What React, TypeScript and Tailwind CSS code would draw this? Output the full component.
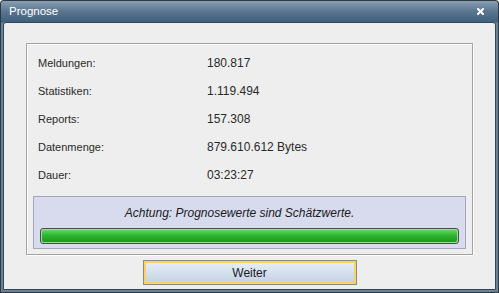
const rows = [
  ['Meldungen:', '180.817'],
  ['Statistiken:', '1.119.494'],
  ['Reports:', '157.308'],
  ['Datenmenge:', '879.610.612 Bytes'],
  ['Dauer:', '03:23:27'],
]

function App() {
  return (
    <div className="w-[499px] h-[293px] bg-[#2c3945] p-[1px] rounded-t-[4px] font-['Liberation_Sans',Arial,sans-serif]">
      <div className="flex flex-col h-full rounded-t-[3px] bg-[linear-gradient(#8aa0b3,#5b7790_10px,#3f607b_21px,#6b8295_22px,#6b8295)]">
        <div className="h-[21px] shrink-0 flex items-center justify-between pl-[8px] pr-[14px]">
          <span className="text-white text-[11.5px] leading-none">Prognose</span>
          <svg width="7" height="7" viewBox="0 0 7 7">
            <path d="M1 1 L6 6 M6 1 L1 6" stroke="#ffffff" strokeWidth="2" strokeLinecap="square" />
          </svg>
        </div>
        <div className="flex-1 px-[2px] pb-[2px]">
          <div className="h-full border border-[#33475a] rounded-t-[3px] bg-[#eeeeee] flex flex-col items-center">
            <div className="mt-[20px] w-[447px] h-[212px] border border-[#a3a3a3] shadow-[inset_1px_1px_0_#ffffff,1px_1px_0_#ffffff] flex flex-col px-[6px] pt-[5px]">
              {rows.map(([label, value]) => (
                <div key={label} className="h-[28px] flex items-center text-[#2a2a2a]">
                  <span className="w-[174px] pl-[5px] text-[11px]">{label}</span>
                  <span className="text-[12px]">{value}</span>
                </div>
              ))}
              <div className="mt-[7px] h-[53px] bg-[#d8dbee] border border-[#a4a7b8] flex flex-col px-[6px]">
                <div className="h-[31px] flex items-center justify-center pr-[20px] italic text-[12px] text-[#1a1a1a]">
                  Achtung: Prognosewerte sind Schätzwerte.
                </div>
                <div className="h-[16px] rounded-[3px] border border-[#4a4a4a] p-[1px] bg-[#9edb9e]">
                  <div className="h-full rounded-[2px] bg-[linear-gradient(#5fd65f,#2fb52f_45%,#1a9a1a)]" />
                </div>
              </div>
            </div>
            <button className="mt-[6px] w-[212px] h-[23px] border-[2px] border-[#f6d463] outline outline-1 outline-[#8a8a8a] bg-[linear-gradient(#e4eef9,#c6d3e2)] text-[12px] text-[#1a1a1a]">
              Weiter
            </button>
          </div>
        </div>
      </div>
    </div>
  )
}

export default App
